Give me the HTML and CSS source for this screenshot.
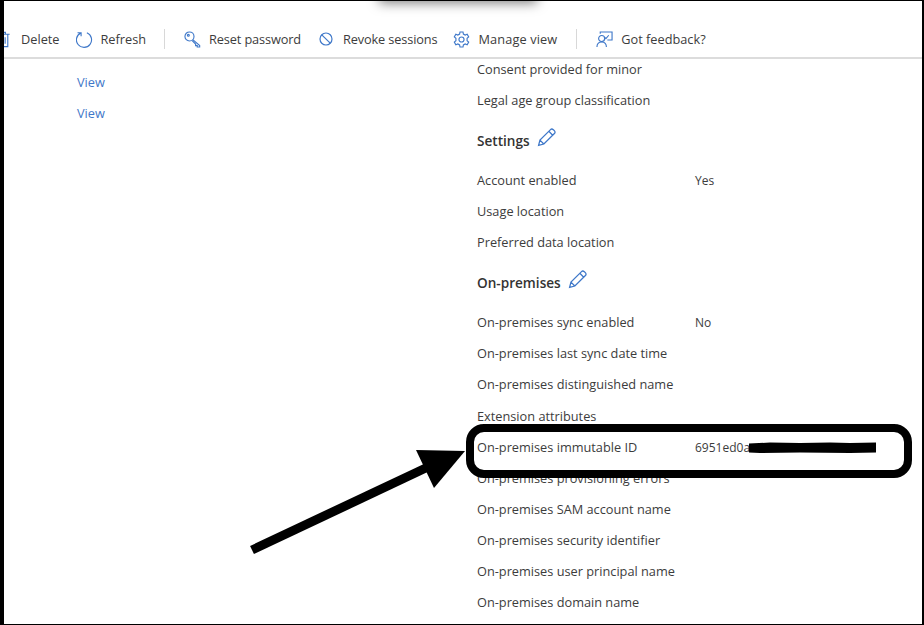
FILE: index.html
```html
<!DOCTYPE html>
<html lang="en">
<head>
<meta charset="utf-8">
<title>User properties</title>
<link rel="stylesheet" href="styles.css">
</head>
<body>
<div class="page">
  <div class="top-shadow"></div>
  <header class="toolbar">
    <div class="tool tool-delete">
      <svg class="icon icon-trash" viewBox="0 0 14 18"><path d="M1 3.5h12M3 3.5V16.5H11V3.5M5.5 3.5V1.5H8.5V3.5M5.8 6.5V13.5M8.2 6.5V13.5"/></svg>
      <span>Delete</span>
    </div>
    <div class="tool">
      <svg class="icon" viewBox="0 0 18 18"><path d="M11.5 1.9A8 8 0 1 1 5.2 2M5.4 5.6V1.8H1.6"/></svg>
      <span>Refresh</span>
    </div>
    <div class="sep"></div>
    <div class="tool tool-reset">
      <svg class="icon" viewBox="0 0 18 18"><circle cx="5.8" cy="5.8" r="4.8"/><circle cx="4.6" cy="4.6" r="1"/><path d="M9.3 9.2L16.6 15.4V17H14V15.5H12.3V13.8L8.6 10.2"/></svg>
      <span class="tight">Reset password</span>
    </div>
    <div class="tool">
      <svg class="icon icon-small" viewBox="0 0 14 14"><circle cx="7" cy="7" r="6"/><path d="M2.8 2.8L11.2 11.2"/></svg>
      <span class="tight">Revoke sessions</span>
    </div>
    <div class="tool">
      <svg class="icon" viewBox="0 0 18 18"><circle cx="9" cy="9" r="2.7"/><path d="M7.4 1H10.6L11 3.2L12.9 4.3L15 3.5L16.6 6.3L14.9 7.7V10.3L16.6 11.7L15 14.5L12.9 13.7L11 14.8L10.6 17H7.4L7 14.8L5.1 13.7L3 14.5L1.4 11.7L3.1 10.3V7.7L1.4 6.3L3 3.5L5.1 4.3L7 3.2Z"/></svg>
      <span class="loose">Manage view</span>
    </div>
    <div class="sep sep-wide"></div>
    <div class="tool">
      <svg class="icon" viewBox="0 0 18 18"><path d="M4.5 3V1H17V9.5H12"/><path d="M9 6.5L10.5 8L13.5 4.5"/><circle cx="6" cy="8" r="3.2"/><path d="M1 17C1 13.5 3 11.6 6 11.6S11 13.5 11 17"/></svg>
      <span>Got feedback?</span>
    </div>
  </header>
  <main class="content">
    <div class="links">
      <a class="link">View</a>
      <a class="link">View</a>
    </div>
    <div class="props">
      <div class="row"><span class="label">Consent provided for minor</span></div>
      <div class="row"><span class="label">Legal age group classification</span></div>
      <h2 class="heading">Settings
        <svg class="pencil" viewBox="0 0 18 18"><path d="M1.5 16.5L2.8 11.5L12.8 1.5C13.5 .8 14.6 .8 15.5 1.6L16.4 2.5C17.2 3.4 17.2 4.5 16.5 5.2L6.5 15.2ZM2.8 11.5L6.5 15.2M11.2 3.1L14.9 6.8"/></svg>
      </h2>
      <div class="row"><span class="label">Account enabled</span><span class="value">Yes</span></div>
      <div class="row"><span class="label">Usage location</span></div>
      <div class="row"><span class="label">Preferred data location</span></div>
      <h2 class="heading">On-premises
        <svg class="pencil" viewBox="0 0 18 18"><path d="M1.5 16.5L2.8 11.5L12.8 1.5C13.5 .8 14.6 .8 15.5 1.6L16.4 2.5C17.2 3.4 17.2 4.5 16.5 5.2L6.5 15.2ZM2.8 11.5L6.5 15.2M11.2 3.1L14.9 6.8"/></svg>
      </h2>
      <div class="row"><span class="label">On-premises sync enabled</span><span class="value">No</span></div>
      <div class="row"><span class="label">On-premises last sync date time</span></div>
      <div class="row"><span class="label">On-premises distinguished name</span></div>
      <div class="row"><span class="label">Extension attributes</span></div>
      <div class="row"><span class="label">On-premises immutable ID</span><span class="value">6951ed0a</span></div>
      <div class="row"><span class="label">On-premises provisioning errors</span></div>
      <div class="row"><span class="label">On-premises SAM account name</span></div>
      <div class="row"><span class="label">On-premises security identifier</span></div>
      <div class="row"><span class="label">On-premises user principal name</span></div>
      <div class="row"><span class="label">On-premises domain name</span></div>
    </div>
  </main>
  <svg class="annotation" viewBox="0 0 924 625">
    <path class="redact" d="M749 443.5L770 442.5L800 443L830 442.5L850 443L876 442.5V452.5L850 453L800 452.5L760 453L749 452.5Z"/>
    <rect class="callout" x="470" y="428" width="438" height="46" rx="14"/>
    <path class="arrow-line" d="M252 550L430 466"/>
    <path class="arrow-head" d="M416 450L465 451L434 488Z"/>
  </svg>
</div>
</body>
</html>
```

FILE: styles.css
```css
* {
  box-sizing: border-box;
}

html,
body {
  margin: 0;
  padding: 0;
  background: #fff;
}

.page {
  position: relative;
  width: 924px;
  height: 625px;
  overflow: hidden;
  background: #fff;
  border-style: solid;
  border-color: #000;
  border-width: 1px 2px 1px 4px;
  font-family: "Open Sans", "Noto Sans", sans-serif;
  font-size: 12.75px;
  color: #3c3c3c;
}

.top-shadow {
  position: absolute;
  left: 378px;
  top: -17px;
  width: 152px;
  height: 12px;
  box-shadow: 0 4px 12px 3px rgba(0, 0, 0, 0.5);
}

.toolbar {
  display: flex;
  align-items: center;
  height: 58px;
  padding: 20px 0 0 0;
  margin-left: -4px;
  border-bottom: 2px solid #dcdcdc;
}

.tool {
  display: flex;
  align-items: center;
  gap: 8px;
  margin-right: 16px;
  white-space: nowrap;
}

.tool-delete {
  gap: 10px;
}

.tool-reset {
  margin-right: 18px;
}

.tight {
  letter-spacing: -0.13px;
}

.loose {
  letter-spacing: 0.12px;
}

.icon {
  width: 17px;
  height: 17px;
  flex: none;
  fill: none;
  stroke: #3f78c9;
  stroke-width: 1.2;
}

.icon-trash {
  width: 14px;
  margin-left: -3px;
}

.icon-small {
  width: 14px;
  height: 14px;
  margin-right: 2px;
}

.sep {
  width: 1px;
  height: 20px;
  margin: 0 19px 0 2px;
  background: #d8d8d8;
}

.sep-wide {
  margin: 0 19px 0 3px;
}

.content {
  display: flex;
  padding-top: 1px;
}

.links {
  display: flex;
  flex-direction: column;
  width: 473px;
  padding: 13px 0 0 73px;
}

.link {
  height: 18px;
  margin-bottom: 13.1px;
  line-height: 18px;
  color: #3f78c9;
}

.row {
  display: flex;
  align-items: baseline;
  height: 18px;
  margin-bottom: 13.1px;
  line-height: 18px;
  white-space: nowrap;
}

.label {
  width: 218px;
  flex: none;
}

.value {
  font-size: 12px;
}

.heading {
  display: flex;
  align-items: center;
  gap: 7px;
  height: 18px;
  margin: 22px 0;
  font-size: 13.6px;
  font-weight: 600;
  color: #333;
}

.pencil {
  width: 19px;
  height: 19px;
  margin-top: -6px;
  fill: none;
  stroke: #3f78c9;
  stroke-width: 1.2;
}

.annotation {
  position: absolute;
  left: -4px;
  top: -1px;
  width: 924px;
  height: 625px;
  pointer-events: none;
}

.redact,
.arrow-head {
  fill: #000;
}

.callout {
  fill: none;
  stroke: #000;
  stroke-width: 8;
}

.arrow-line {
  fill: none;
  stroke: #000;
  stroke-width: 9;
}
```
